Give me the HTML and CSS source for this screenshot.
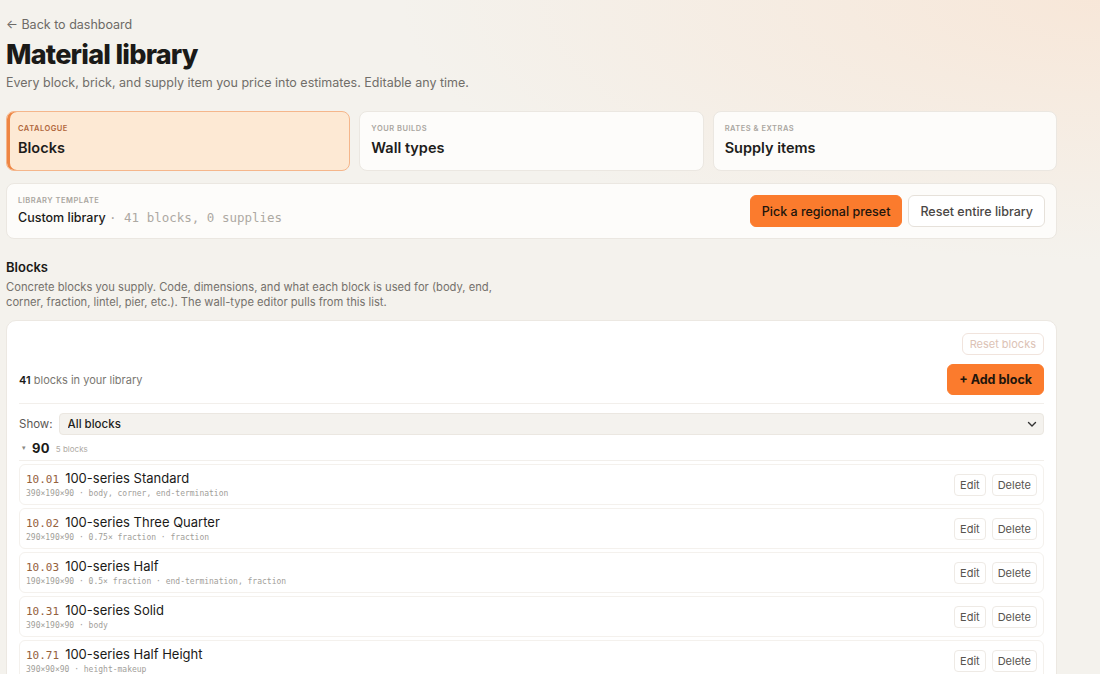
FILE: index.html
```html
<!DOCTYPE html>
<html lang="en">
<head>
  <meta charset="UTF-8">
  <meta name="viewport" content="width=device-width, initial-scale=1.0">
  <title>Material library</title>
  <link rel="stylesheet" href="styles.css">
</head>
<body>
  <div class="page">
    <a class="back" href="#">← Back to dashboard</a>
    <h1>Material library</h1>
    <p class="lead">Every block, brick, and supply item you price into estimates. Editable any time.</p>

    <!-- section tabs -->
    <div class="tabs">
      <a class="tab active" href="#">
        <span class="tab-label">Catalogue</span>
        <span class="tab-title">Blocks</span>
      </a>
      <a class="tab" href="#">
        <span class="tab-label">Your builds</span>
        <span class="tab-title">Wall types</span>
      </a>
      <a class="tab" href="#">
        <span class="tab-label">Rates &amp; extras</span>
        <span class="tab-title">Supply items</span>
      </a>
    </div>

    <!-- template -->
    <div class="template">
      <div>
        <div class="tab-label">Library template</div>
        <div class="template-name">Custom library <span class="mono muted">· 41 blocks, 0 supplies</span></div>
      </div>
      <div class="actions">
        <button class="btn primary">Pick a regional preset</button>
        <button class="btn">Reset entire library</button>
      </div>
    </div>

    <h2>Blocks</h2>
    <p class="desc">Concrete blocks you supply. Code, dimensions, and what each block is used for (body, end, corner, fraction, lintel, pier, etc.). The wall-type editor pulls from this list.</p>

    <div class="panel">
      <div class="panel-top">
        <button class="btn small faded">Reset blocks</button>
      </div>
      <div class="panel-head">
        <div class="count"><b>41</b> blocks in your library</div>
        <button class="btn primary add">+ Add block</button>
      </div>

      <div class="filter">
        <label for="show">Show:</label>
        <div class="select-wrap">
          <select id="show">
            <option>All blocks</option>
            <option>Body blocks</option>
            <option>Corner blocks</option>
            <option>Fractions</option>
          </select>
          <svg class="chev" width="12" height="12" viewBox="0 0 12 12"><path d="M2.5 4.5 6 8l3.5-3.5" fill="none" stroke="#333" stroke-width="1.4" stroke-linecap="round" stroke-linejoin="round"/></svg>
        </div>
      </div>

      <div id="groups"></div>
    </div>
  </div>

  <script>
    // blocks grouped by wall width (mm)
    const groups = [
      { width: 90, blocks: [
        ["10.01", "100-series Standard", "390×190×90", "", "body, corner, end-termination"],
        ["10.02", "100-series Three Quarter", "290×190×90", "0.75× fraction", "fraction"],
        ["10.03", "100-series Half", "190×190×90", "0.5× fraction", "end-termination, fraction"],
        ["10.31", "100-series Solid", "390×190×90", "", "body"],
        ["10.71", "100-series Half Height", "390×90×90", "", "height-makeup"]
      ]},
      { width: 140, blocks: [
        ["15.01", "150-series Standard", "390×190×140", "", "body"],
        ["15.02", "150-series Three Quarter", "290×190×140", "0.75× fraction", "fraction"],
        ["15.03", "150-series Half", "190×190×140", "0.5× fraction", "end-termination, fraction"],
        ["15.12", "150-series Corner", "390×190×140", "", "corner"],
        ["15.18", "150-series End", "390×190×140", "", "end-termination"],
        ["15.20", "150-series Lintel", "390×190×140", "", "lintel"],
        ["15.31", "150-series Solid", "390×190×140", "", "body"],
        ["15.48", "150-series Knock-out Bond Beam", "390×190×140", "", "bond-beam"],
        ["15.71", "150-series Half Height", "390×90×140", "", "height-makeup"]
      ]},
      { width: 190, blocks: [
        ["20.01", "200-series Standard", "390×190×190", "", "body"],
        ["20.02", "200-series Three Quarter", "290×190×190", "0.75× fraction", "fraction"],
        ["20.03", "200-series Half", "190×190×190", "0.5× fraction", "end-termination, fraction"],
        ["20.12", "200-series Corner", "390×190×190", "", "corner"],
        ["20.18", "200-series End", "390×190×190", "", "end-termination"],
        ["20.20", "200-series Lintel", "390×190×190", "", "lintel"],
        ["20.21", "200-series Double U", "390×190×190", "", "lintel, bond-beam"],
        ["20.31", "200-series Solid", "390×190×190", "", "body"],
        ["20.42", "200-series Pier", "390×190×190", "", "pier"],
        ["20.48", "200-series Knock-out Bond Beam", "390×190×190", "", "bond-beam"],
        ["20.61", "200-series Control Joint", "390×190×190", "", "control-joint"],
        ["20.71", "200-series Half Height", "390×90×190", "", "height-makeup"]
      ]},
      { width: 290, blocks: [
        ["30.01", "300-series Standard", "390×190×290", "", "body"],
        ["30.02", "300-series Three Quarter", "290×190×290", "0.75× fraction", "fraction"],
        ["30.03", "300-series Half", "190×190×290", "0.5× fraction", "end-termination, fraction"],
        ["30.12", "300-series Corner", "390×190×290", "", "corner"],
        ["30.18", "300-series End", "390×190×290", "", "end-termination"],
        ["30.20", "300-series Lintel", "390×190×290", "", "lintel"],
        ["30.48", "300-series Knock-out Bond Beam", "390×190×290", "", "bond-beam"],
        ["30.71", "300-series Half Height", "390×90×290", "", "height-makeup"]
      ]},
      { width: 110, blocks: [
        ["11.01", "110 Besser Brick", "230×76×110", "", "body"],
        ["11.02", "110 Double Brick", "230×162×110", "", "body"],
        ["11.03", "110 Half Brick", "110×76×110", "0.5× fraction", "fraction"],
        ["11.12", "110 Corner Brick", "230×76×110", "", "corner"],
        ["11.31", "110 Solid Brick", "230×76×110", "", "body"],
        ["11.42", "110 Pier Brick", "230×162×110", "", "pier"],
        ["11.71", "110 Capping", "390×50×110", "", "capping"]
      ]}
    ];

    function renderGroups() {
      let html = "";
      groups.forEach(g => {
        html += `<div class="group-head"><span class="caret">▾</span><b>${g.width}</b><span class="group-count">${g.blocks.length} blocks</span></div>`;
        g.blocks.forEach(b => {
          const meta = [b[2], b[3], b[4]].filter(x => x).join(" · ");
          html += `<div class="row">
            <div class="row-main">
              <div class="row-title"><span class="code">${b[0]}</span>${b[1]}</div>
              <div class="row-meta">${meta}</div>
            </div>
            <div class="row-actions"><button class="btn tiny">Edit</button><button class="btn tiny">Delete</button></div>
          </div>`;
        });
      });
      document.getElementById("groups").innerHTML = html;
    }
    renderGroups();
  </script>
</body>
</html>
```

FILE: styles.css
```css
html { background: #f4f2ed; }
body {
  margin: 0;
  font-family: Inter, "Liberation Sans", sans-serif;
  color: #1b1a18;
  background: radial-gradient(ellipse 700px 260px at 100% 0, rgba(250, 222, 200, 0.55), rgba(244, 242, 237, 0));
  background-repeat: no-repeat;
}
::-webkit-scrollbar { width: 8px; }
::-webkit-scrollbar-track { background: #f4f2ed; border-left: 1px solid #ebe8e2; }
::-webkit-scrollbar-thumb { background: #c9c7c3; }

.page { width: 1051px; margin-left: 6px; padding: 16px 0 60px; }
.mono { font-family: "DejaVu Sans Mono", "Liberation Mono", monospace; }
.muted { color: #ada9a3; }

.back { display: block; font-size: 12.5px; line-height: 18px; color: #6d6a66; text-decoration: none; }
h1 { margin: 4px 0 0; font-size: 27px; line-height: 34px; font-weight: 800; letter-spacing: -0.75px; }
.lead { margin: 2px 0 0; font-size: 12.5px; line-height: 18px; color: #716e69; }

.tabs { display: grid; grid-template-columns: repeat(3, 1fr); gap: 9px; margin-top: 19px; }
.tab {
  display: flex; flex-direction: column; gap: 4px;
  height: 60px; box-sizing: border-box; padding: 12px 11px;
  background: #fdfcfa; border: 1px solid #ebe7e1; border-radius: 8px;
  text-decoration: none; color: inherit;
}
.tab.active { background: #fde9d4; border: 1.5px solid #f5b68b; box-shadow: inset 3px 0 0 #ee8543; }
.tab-label { font-size: 7.5px; line-height: 10px; font-weight: 600; letter-spacing: 0.5px; text-transform: uppercase; color: #aaa6a0; }
.tab.active .tab-label { color: #b1673c; }
.tab-title { font-size: 14.5px; line-height: 20px; font-weight: 600; color: #1e1d1b; }

.template {
  display: flex; align-items: center; justify-content: space-between;
  height: 56px; box-sizing: border-box; margin-top: 12px; padding: 0 11px;
  background: #fdfcfa; border: 1px solid #ebe7e1; border-radius: 8px;
}
.template .tab-label { margin-bottom: 3px; }
.template-name { font-size: 12.5px; line-height: 18px; font-weight: 500; }
.template-name .mono { font-size: 12.5px; font-weight: 400; }
.actions { display: flex; gap: 6px; }

.btn {
  height: 32px; padding: 0 11px; box-sizing: border-box;
  font: 500 12.5px Inter, "Liberation Sans", sans-serif; color: #4a4744;
  background: #fff; border: 1px solid #e6e1da; border-radius: 6px; cursor: pointer;
}
.btn.primary { background: #fb7b2d; border-color: #fb7b2d; color: #21150c; padding: 0 11px; }
.btn.small { height: 22px; padding: 0 7px; font-size: 11px; font-weight: 400; }
.btn.faded { color: #dcc2b5; border-color: #f1e4dd; }
.btn.add { height: 31px; font-weight: 700; padding: 0 11px; }
.btn.tiny { height: 22px; padding: 0 5px; font-size: 11px; font-weight: 400; color: #57544f; border-color: #eeeae5; border-radius: 4px; }

h2 { margin: 19px 0 0; font-size: 13px; line-height: 18px; font-weight: 600; }
.desc { margin: 4px 0 0; max-width: 492px; font-size: 11.2px; line-height: 15px; color: #74716c; }

.panel { margin-top: 10px; padding: 12px; background: #fff; border: 1px solid #ece8e2; border-radius: 10px; }
.panel-top { display: flex; justify-content: flex-end; }
.panel-head {
  display: flex; align-items: center; justify-content: space-between;
  margin-top: 9px; padding-bottom: 8px; border-bottom: 1px solid #f2efeb;
}
.count { font-size: 11px; color: #7a7772; }
.count b { color: #1b1a18; font-weight: 600; }

.filter { display: flex; align-items: center; gap: 6px; margin-top: 9px; }
.filter label { font-size: 11.5px; color: #5b5854; }
.select-wrap { position: relative; flex: 1; height: 22px; }
.select-wrap select {
  display: block; width: 100%; height: 22px; padding: 0 8px; appearance: none;
  font: 500 11.5px Inter, "Liberation Sans", sans-serif; color: #1f1e1c;
  background: #f4f2ee; border: 1px solid #ebe7e1; border-radius: 4px;
}
.chev { position: absolute; right: 6px; top: 5px; pointer-events: none; }

.group-head {
  display: flex; align-items: center; gap: 6px;
  height: 25px; padding: 0 3px; border-bottom: 1px solid #f2efeb;
  font-size: 13px; line-height: 18px;
}
.group-head b { font-weight: 700; letter-spacing: 0.3px; }
.caret { font-size: 7px; color: #8a8782; }
.group-count { font-size: 8px; color: #aeaaa4; padding-top: 2px; }

.row {
  display: flex; align-items: center; justify-content: space-between;
  height: 41px; box-sizing: border-box;
  margin-top: 3px; padding: 0 6px 0 6px; border: 1px solid #f4f1ed; border-radius: 6px;
}
.row-title { display: flex; align-items: baseline; height: 16px; font-size: 13px; line-height: 16px; }
.code { font-family: "DejaVu Sans Mono", "Liberation Mono", monospace; font-size: 11px; color: #94613d; margin-right: 6px; }
.row-meta { margin-top: 2px; font-family: "DejaVu Sans Mono", "Liberation Mono", monospace; font-size: 8px; line-height: 12px; color: #a19e99; }
.row-actions { display: flex; gap: 6px; }
```
